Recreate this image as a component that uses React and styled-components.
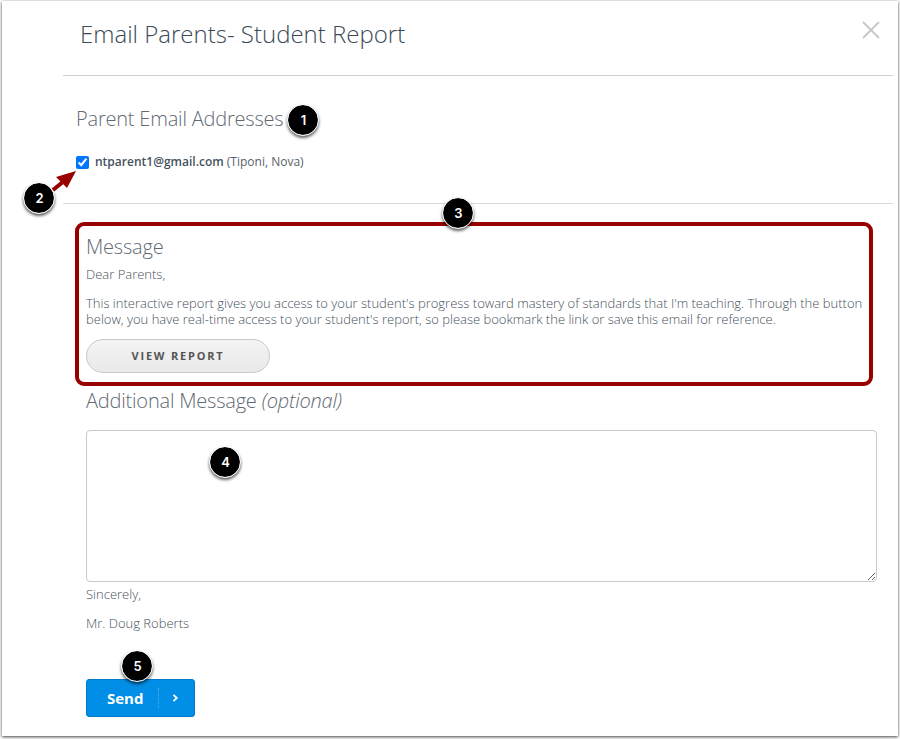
import React, { useState } from 'react'
import styled, { createGlobalStyle } from 'styled-components'

const GlobalStyle = createGlobalStyle`
* {
  box-sizing: border-box;
}
body {
  margin: 0;
  background: #fff;
  font-family: 'Open Sans', sans-serif;
}
`

const Page = styled.div`
width: 900px;
height: 739px;
padding: 1px 2px 0;
overflow: hidden;
`

const Dialog = styled.div`
position: relative;
height: 735px;
background: #fff;
box-shadow: 0 1px 3px rgba(0, 0, 0, 0.75);
color: #56616b;
`

const Header = styled.header`
display: flex;
justify-content: space-between;
align-items: flex-start;
height: 75px;
margin: 0 5px 0 61px;
padding: 16px 13px 0 17px;
border-bottom: 1px solid #cfcfcf;
`

const Title = styled.h1`
margin: 0;
font-size: 24px;
font-weight: 300;
line-height: 34px;
color: #3a4a57;
`

const CloseButton = styled.button`
display: flex;
margin-top: 4px;
padding: 0;
border: 0;
background: none;
cursor: pointer;
`

const Section = styled.section`
height: 128px;
margin: 0 5px 0 61px;
padding: 29px 0 0 13px;
border-bottom: 1px solid #d9d9d9;
`

const Heading = styled.h2`
margin: 0;
font-size: 20px;
font-weight: 300;
line-height: 28px;
letter-spacing: -0.2px;
white-space: nowrap;
color: #5f6a74;
`

const ParentRow = styled.label`
display: flex;
align-items: flex-start;
gap: 6px;
margin-top: 21px;
font-size: 12px;
line-height: 16px;
font-weight: 400;
white-space: pre;

input {
  width: 13px;
  height: 13px;
  margin: 2px 0 0;
  accent-color: #0075ff;
}
b {
  font-weight: 600;
  color: #46525e;
}
`

const MessageBox = styled.section`
height: 164px;
margin: 18px 25px 0 73px;
padding: 7px 0 0 7px;
border: 4px solid #990000;
border-radius: 9px;
`

const Text = styled.p`
margin: ${({ $top }) => $top || '0'} 0 0;
font-size: 13px;
font-weight: 300;
line-height: 16px;
white-space: nowrap;
color: #46525e;
`

const ViewButton = styled.button`
display: block;
width: 184px;
height: 34px;
margin-top: 12px;
padding: 0 0 2px;
border: 1px solid #c9c9c9;
border-radius: 17px;
background: linear-gradient(#f4f4f4, #e9e9e9);
font-family: inherit;
font-size: 11px;
font-weight: 700;
letter-spacing: 1.8px;
color: #555;
`

const Form = styled.form`
margin: 0 21px 0 84px;
padding-top: 1px;
`

const MessageInput = styled.textarea`
display: block;
width: 791px;
height: 152px;
margin-top: 15px;
padding: 8px;
border: 1px solid #c5cbd0;
border-radius: 4px;
outline: 0;
resize: vertical;
font: inherit;
`

const SendButton = styled.button`
display: flex;
align-items: center;
width: 109px;
height: 38px;
margin-top: 48px;
padding: 0 0 0 20px;
border: 1px solid #0079c8;
border-radius: 3px;
background: #008ee6;
font-family: inherit;
font-size: 15px;
font-weight: 700;
color: #fff;
`

const SendArrow = styled.span`
display: flex;
align-items: center;
height: 20px;
margin-left: 15px;
padding-left: 13px;
border-left: 1px dotted #4bb0ee;
`

// numbered step callout, sits on top of the dialog
const Marker = styled.span`
position: absolute;
left: ${({ $x }) => $x}px;
top: ${({ $y }) => $y}px;
display: flex;
justify-content: center;
align-items: center;
width: 32px;
height: 32px;
padding-left: 1px;
border: 1px solid #fff;
border-radius: 50%;
background: #000;
background-clip: padding-box;
box-shadow: 0 2px 3px rgba(0, 0, 0, 0.6);
font-family: Inter, sans-serif;
font-size: 13px;
font-weight: 600;
color: #fff;
`

const Arrow = styled.svg`
position: absolute;
left: 48px;
top: 166px;
`

const markers = [
  { label: '1', x: 285, y: 103 },
  { label: '2', x: 21, y: 181 },
  { label: '3', x: 440, y: 196 },
  { label: '4', x: 207, y: 445 },
  { label: '5', x: 119, y: 649 },
]

function App() {
  const [checked, setChecked] = useState(true)
  const [message, setMessage] = useState('')

  return (
    <Page>
      <GlobalStyle />
      <Dialog>
        <Header>
          <Title>Email Parents- Student Report</Title>
          <CloseButton aria-label="Close">
            <svg width="18" height="18" viewBox="0 0 18 18" fill="none" stroke="#c8c8c8" strokeWidth="1.9">
              <path d="M1 1L17 17M17 1L1 17" />
            </svg>
          </CloseButton>
        </Header>
        <Section>
          <Heading>Parent Email Addresses</Heading>
          <ParentRow>
            <input type="checkbox" checked={checked} onChange={() => setChecked(!checked)} />
            <span><b>ntparent1@gmail.com</b> (Tiponi, Nova)</span>
          </ParentRow>
        </Section>
        <MessageBox>
          <Heading>Message</Heading>
          <Text $top="5px">Dear Parents,</Text>
          <Text $top="13px">
            This interactive report gives you access to your student's progress toward mastery of standards that I'm teaching. Through the button
            <br />
            below, you have real-time access to your student's report, so please bookmark the link or save this email for reference.
          </Text>
          <ViewButton>VIEW REPORT</ViewButton>
        </MessageBox>
        <Form onSubmit={(e) => e.preventDefault()}>
          <Heading>Additional Message <i>(optional)</i></Heading>
          <MessageInput value={message} onChange={(e) => setMessage(e.target.value)} />
          <Text $top="4px">Sincerely,</Text>
          <Text $top="13px">Mr. Doug Roberts</Text>
          <SendButton>
            Send
            <SendArrow>
              <svg width="7" height="8" viewBox="0 0 7 8" fill="none" stroke="#fff" strokeWidth="1.8">
                <path d="M1.5 0.8L4.8 4L1.5 7.2" />
              </svg>
            </SendArrow>
          </SendButton>
        </Form>
        <Arrow width="28" height="26" viewBox="0 0 28 26">
          <path d="M3 23L14 14" stroke="#990000" strokeWidth="4" />
          <path d="M26 4L17 21L6 10Z" fill="#990000" />
        </Arrow>
        {markers.map((m) => (
          <Marker key={m.label} $x={m.x} $y={m.y}>{m.label}</Marker>
        ))}
      </Dialog>
    </Page>
  )
}

export default App
